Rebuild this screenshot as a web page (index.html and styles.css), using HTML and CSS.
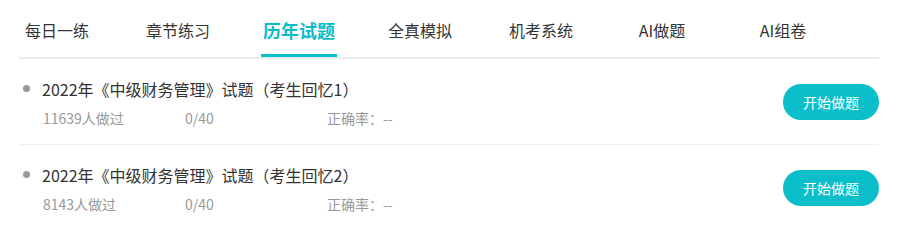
FILE: index.html
```html
<!DOCTYPE html>
<html lang="zh">
<head>
<meta charset="utf-8">
<title>历年试题</title>
<link rel="stylesheet" href="styles.css">
</head>
<body>
<div class="panel">
  <nav class="tabs">
    <div class="tab">每日一练</div>
    <div class="tab">章节练习</div>
    <div class="tab active">历年试题</div>
    <div class="tab">全真模拟</div>
    <div class="tab">机考系统</div>
    <div class="tab">AI做题</div>
    <div class="tab">AI组卷</div>
  </nav>
  <ul class="list">
    <li class="item">
      <div class="info">
        <div class="title"><span class="dot"></span>2022年《中级财务管理》试题（考生回忆1）</div>
        <div class="meta">
          <span class="col">11639人做过</span>
          <span class="col">0/40</span>
          <span class="col">正确率：--</span>
        </div>
      </div>
      <button class="start">开始做题</button>
    </li>
    <li class="item">
      <div class="info">
        <div class="title"><span class="dot"></span>2022年《中级财务管理》试题（考生回忆2）</div>
        <div class="meta">
          <span class="col">8143人做过</span>
          <span class="col">0/40</span>
          <span class="col">正确率：--</span>
        </div>
      </div>
      <button class="start">开始做题</button>
    </li>
  </ul>
</div>
</body>
</html>
```

FILE: styles.css
```css
* { box-sizing: border-box; }
html, body { margin: 0; padding: 0; background: #fff; }
body {
  font-family: "Noto Sans CJK SC", "Noto Sans", sans-serif;
  color: #333;
}
.panel {
  width: 860px;
  margin-left: 19px;
}
.tabs {
  display: flex;
  gap: 45px;
  border-bottom: 2px solid #ececec;
  height: 59px;
}
.tab {
  width: 76px;
  height: 57px;
  padding-top: 18px;
  text-align: center;
  font-size: 16px;
  line-height: 24px;
  color: #333;
  white-space: nowrap;
  border-bottom: 3px solid transparent;
}
.tab.active {
  color: #0bbcc8;
  font-weight: bold;
  font-size: 18px;
  border-bottom-color: #0bbfca;
}
.list {
  list-style: none;
  margin: 0;
  padding: 0;
}
.item {
  display: flex;
  align-items: center;
  justify-content: space-between;
  height: 86px;
  padding: 17px 0 16px;
  border-bottom: 1px solid #efefef;
}
.title {
  display: flex;
  align-items: center;
  font-size: 16px;
  line-height: 24px;
  color: #333;
}
.dot {
  width: 7px;
  height: 7px;
  border-radius: 50%;
  background: #999;
  margin-left: 4px;
  margin-right: 12px;
}
.meta {
  display: flex;
  margin-top: 7px;
  padding-left: 24px;
  font-size: 14px;
  line-height: 20px;
  color: #999;
}
.col { width: 142px; }
.start {
  width: 96px;
  height: 36px;
  border: none;
  border-radius: 18px;
  background: #0bbfca;
  color: #fff;
  font-family: inherit;
  font-size: 14px;
  padding: 0;
  cursor: pointer;
}
```
